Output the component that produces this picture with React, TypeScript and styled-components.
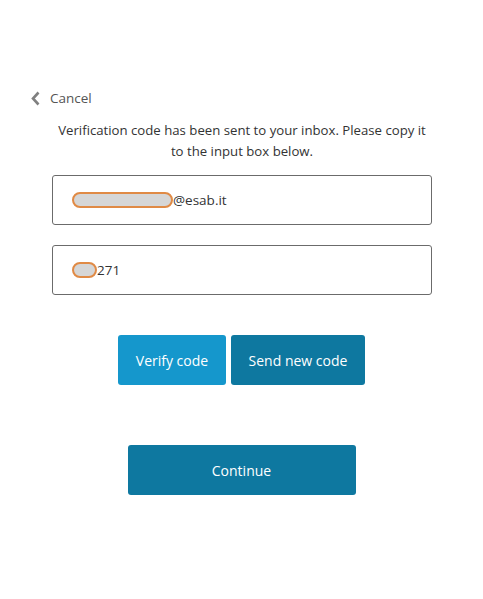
import React from 'react';
import styled, { createGlobalStyle } from 'styled-components';

const GlobalStyle = createGlobalStyle`
  body {
    margin: 0;
    background: #ffffff;
    font-family: "Open Sans", "Noto Sans", Arial, sans-serif;
    color: #333;
  }
`;

const Page = styled.div`
  width: 483px;
  height: 599px;
  padding-top: 88px;
  box-sizing: border-box;
  display: flex;
  flex-direction: column;
`;

const CancelLink = styled.a`
  display: flex;
  align-items: center;
  gap: 9px;
  margin-left: 30px;
  height: 20px;
  font-size: 13.5px;
  color: #555;
  text-decoration: none;
  cursor: pointer;
`;

const Intro = styled.p`
  margin: 12px 0 0 52px;
  width: 380px;
  font-size: 13.2px;
  line-height: 21px;
  text-align: center;
  color: #333;
`;

const Form = styled.div`
  margin: 13px 0 0 52px;
  width: 380px;
  display: flex;
  flex-direction: column;
  gap: 20px;
`;

const Field = styled.div`
  height: 50px;
  box-sizing: border-box;
  border: 1px solid #6b6b6b;
  border-radius: 3px;
  padding-left: 19px;
  display: flex;
  align-items: center;
  font-size: 13.5px;
  color: #333;
`;

const Masked = styled.span<{ $w: number }>`
  display: inline-block;
  width: ${(p) => p.$w}px;
  height: 16px;
  box-sizing: border-box;
  border: 2.5px solid #e08a45;
  border-radius: 8px;
  background: #d6d6d6;
`;

const ButtonRow = styled.div`
  margin-top: 40px;
  display: flex;
  justify-content: center;
  gap: 5px;
`;

const Button = styled.button<{ $tone: 'light' | 'dark'; $w: number }>`
  width: ${(p) => p.$w}px;
  height: 50px;
  border: none;
  border-radius: 3px;
  background: ${(p) => (p.$tone === 'light' ? '#1597cc' : '#0e78a0')};
  color: #fff;
  font-family: inherit;
  font-size: 14px;
  cursor: pointer;
`;

const ContinueRow = styled.div`
  margin-top: 60px;
  display: flex;
  justify-content: center;
`;

export default function App() {
  return (
    <>
      <GlobalStyle />
      <Page>
        <CancelLink>
          <svg width="11" height="15" viewBox="0 0 11 15">
            <path d="M8.5 1.5 L3 7.5 L8.5 13.5" fill="none" stroke="#808080" strokeWidth="2.6" />
          </svg>
          Cancel
        </CancelLink>
        <Intro>
          Verification code has been sent to your inbox. Please copy it to the input box below.
        </Intro>
        <Form>
          <Field>
            <Masked $w={101} />@esab.it
          </Field>
          <Field>
            <Masked $w={25} />271
          </Field>
        </Form>
        <ButtonRow>
          <Button $tone="light" $w={108}>Verify code</Button>
          <Button $tone="dark" $w={134}>Send new code</Button>
        </ButtonRow>
        <ContinueRow>
          <Button $tone="dark" $w={228}>Continue</Button>
        </ContinueRow>
      </Page>
    </>
  );
}
